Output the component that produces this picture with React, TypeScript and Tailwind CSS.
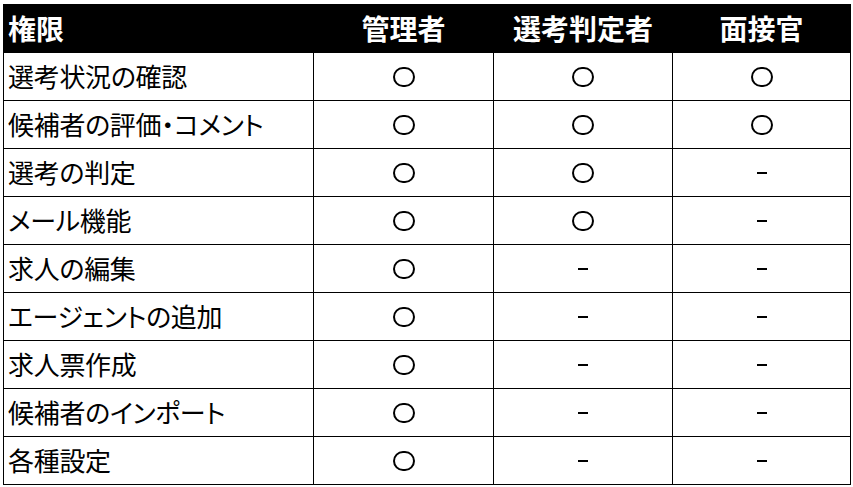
import React from "react";

type Mark = "o" | "-";

const rows: { label: string; marks: Mark[] }[] = [
  { label: "選考状況の確認", marks: ["o", "o", "o"] },
  { label: "候補者の評価・コメント", marks: ["o", "o", "o"] },
  { label: "選考の判定", marks: ["o", "o", "-"] },
  { label: "メール機能", marks: ["o", "o", "-"] },
  { label: "求人の編集", marks: ["o", "-", "-"] },
  { label: "エージェントの追加", marks: ["o", "-", "-"] },
  { label: "求人票作成", marks: ["o", "-", "-"] },
  { label: "候補者のインポート", marks: ["o", "-", "-"] },
  { label: "各種設定", marks: ["o", "-", "-"] },
];

const roles = ["管理者", "選考判定者", "面接官"];

export default function App() {
  return (
    <div className="w-[853px] h-[487px] bg-white pt-[4px] pl-[3px] font-['Noto_Sans_CJK_JP','Noto_Sans',sans-serif]">
      <div className="w-[848px] grid grid-cols-[309px_179px_178px_177px] auto-rows-[47px] gap-px bg-black border border-black">
        {/* header */}
        <div className="bg-black text-white font-bold text-[28px] flex items-center pl-[4px] pb-[2px]">権限</div>
        {roles.map((r) => (
          <div key={r} className="bg-black text-white font-bold text-[28px] flex items-center justify-center pb-[2px]">
            {r}
          </div>
        ))}

        {rows.map((row) => (
          <React.Fragment key={row.label}>
            <div className="bg-white text-black text-[26px] flex items-center pl-[4px] pb-[3px] tracking-[-0.3px] [font-feature-settings:'palt']">
              {row.label}
            </div>
            {row.marks.map((m, i) => (
              <div key={i} className="bg-white text-black flex items-center justify-center">
                {m === "o" ? (
                  <span className="block w-[22px] h-[20px] rounded-full border-2 border-black" />
                ) : (
                  <span className="block w-[10px] h-[2px] bg-black" />
                )}
              </div>
            ))}
          </React.Fragment>
        ))}
      </div>
    </div>
  );
}
